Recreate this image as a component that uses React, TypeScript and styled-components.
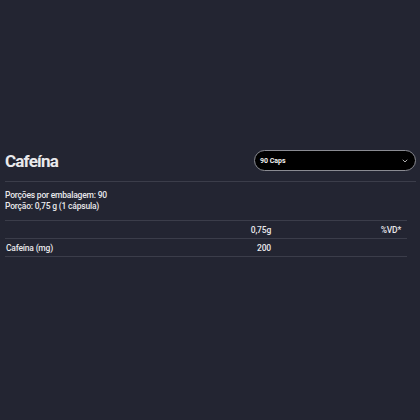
import React, { useState } from 'react'
import styled, { createGlobalStyle } from 'styled-components'

const GlobalStyle = createGlobalStyle`
  html, body {
    margin: 0;
    padding: 0;
    background: #232532;
  }
  body {
    font-family: Roboto, "Liberation Sans", sans-serif;
    color: #e9e9ec;
  }
`

interface Row {
  label: string
  amount: string
  vd: string
}

const rows: Row[] = [{ label: 'Cafeína (mg)', amount: '200', vd: '' }]

const Page = styled.div`
  min-height: 420px;
  box-sizing: border-box;
  padding: 150px 4px 0 5px;
`

const Header = styled.div`
  display: flex;
  align-items: center;
  justify-content: space-between;
  padding-bottom: 10px;
  border-bottom: 1px solid #3b3d4a;
`

const Title = styled.h2`
  margin: 0;
  font-size: 17px;
  font-weight: 700;
  letter-spacing: -0.8px;
  line-height: 20px;
`

const Select = styled.button`
  width: 162px;
  height: 21px;
  box-sizing: border-box;
  display: flex;
  align-items: center;
  justify-content: space-between;
  padding: 0 6px 0 5px;
  background: #000;
  border: 1px solid #8a8b92;
  border-radius: 11px;
  color: #f2f2f2;
  font-family: Roboto, "Liberation Sans", sans-serif;
  font-size: 7px;
  font-weight: 700;
  cursor: pointer;
`

const Info = styled.div`
  padding: 8px 0 8px 0;
  font-size: 8.5px;
  font-weight: 500;
  letter-spacing: -0.2px;
  line-height: 11px;
`

const Table = styled.div`
  width: 402px;
  border-top: 1px solid #3b3d4a;
`

const TableRow = styled.div`
  display: grid;
  grid-template-columns: 142px 130px 130px;
  height: 17px;
  align-items: center;
  border-bottom: 1px solid #3b3d4a;
  font-size: 8.5px;
  font-weight: 500;
  letter-spacing: -0.2px;
`

const Cell = styled.div<{ $right?: boolean }>`
  text-align: ${(p) => (p.$right ? 'right' : 'left')};
  padding: ${(p) => (p.$right ? '0 6px 0 0' : '0 0 0 1px')};
`

const Chevron = () => (
  <svg width="8" height="8" viewBox="0 0 24 24" fill="none" stroke="#d8d8d8" strokeWidth="2.4" strokeLinecap="round" strokeLinejoin="round">
    <path d="M6 9l6 6 6-6" />
  </svg>
)

const App: React.FC = () => {
  const [size] = useState('90 Caps')

  return (
    <Page>
      <GlobalStyle />
      <Header>
        <Title>Cafeína</Title>
        <Select>
          <span>{size}</span>
          <Chevron />
        </Select>
      </Header>
      <Info>
        <div>Porções por embalagem: 90</div>
        <div>Porção: 0,75 g (1 cápsula)</div>
      </Info>
      <Table>
        <TableRow>
          <Cell />
          <Cell $right>0,75g</Cell>
          <Cell $right>%VD*</Cell>
        </TableRow>
        {rows.map((r) => (
          <TableRow key={r.label}>
            <Cell>{r.label}</Cell>
            <Cell $right>{r.amount}</Cell>
            <Cell $right>{r.vd}</Cell>
          </TableRow>
        ))}
      </Table>
    </Page>
  )
}

export default App
